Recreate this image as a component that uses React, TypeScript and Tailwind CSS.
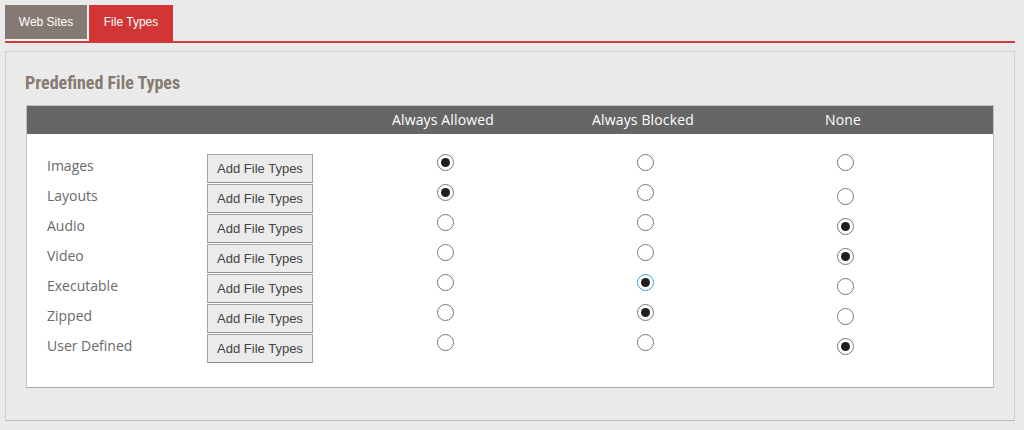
import React from 'react';

type Choice = 0 | 1 | 2;

interface FileTypeRow {
  label: string;
  choice: Choice;
  focused?: boolean;
}

const rows: FileTypeRow[] = [
  { label: 'Images', choice: 0 },
  { label: 'Layouts', choice: 0 },
  { label: 'Audio', choice: 2 },
  { label: 'Video', choice: 2 },
  { label: 'Executable', choice: 1, focused: true },
  { label: 'Zipped', choice: 1 },
  { label: 'User Defined', choice: 2 },
];

const openSans = { fontFamily: '"Open Sans", "Noto Sans", sans-serif' };
const arial = { fontFamily: '"Liberation Sans", Arial, sans-serif' };

function Radio({ checked, focused }: { checked: boolean; focused?: boolean }) {
  return (
    <div
      className={`w-[17px] h-[17px] rounded-full border bg-white flex items-center justify-center ${
        focused ? 'border-[#3aa3dc]' : 'border-[#7a7a7a]'
      }`}
    >
      {checked && <div className="w-[9px] h-[9px] rounded-full bg-[#1e1e1e]" />}
    </div>
  );
}

export default function App() {
  return (
    <div className="w-[1024px] h-[430px] bg-[#eaeaea] pt-[5px] pl-[5px] pr-[9px] overflow-hidden">
      {/* Tabs */}
      <div className="flex items-start border-b-2 border-[#d13a3a]" style={arial}>
        <div className="w-[84px] h-[36px] border-r-2 border-b-2 border-[#f3f3f3]">
          <div className="w-full h-full bg-[#857a73] text-white text-[12px] flex items-center justify-center pb-[1px]">
            Web Sites
          </div>
        </div>
        <div className="w-[84px] h-[36px] bg-[#d13535] text-white text-[12px] flex items-center justify-center pb-[3px]">
          File Types
        </div>
      </div>

      {/* Panel */}
      <div className="mt-[8px] h-[370px] border border-[#cfcfcf] border-b-[#bdbdbd] pl-[20px] pr-[20px] pt-[19px]">
        <h2
          className="text-[18px] leading-[24px] font-bold text-[#867a72] -ml-[1px]"
          style={{ fontFamily: '"Roboto Condensed", "DejaVu Sans Condensed", Roboto, sans-serif' }}
        >
          Predefined File Types
        </h2>

        <div className="mt-[10px] border border-[#c2c2c2] border-b-[#a8a8a8] bg-white pb-[24px]">
          {/* Header */}
          <div
            className="h-[28px] bg-[#666666] text-white text-[14px] grid grid-cols-[20px_160px_106px_32px_200px_200px_200px] items-center pb-[2px]"
            style={openSans}
          >
            <div />
            <div />
            <div />
            <div />
            <div className="text-center -ml-[4px] tracking-[0.01em]">Always Allowed</div>
            <div className="text-center -ml-[4px] tracking-[0.01em]">Always Blocked</div>
            <div className="text-center -ml-[4px] tracking-[0.01em]">None</div>
          </div>

          {/* Rows */}
          <div className="pt-[19px]">
            {rows.map((row, i) => (
              <div
                key={row.label}
                className="h-[30px] grid grid-cols-[20px_160px_106px_32px_200px_200px_200px]"
              >
                <div />
                <div
                  className="text-[14px] text-[#6a6a6a] leading-[20px] pt-[3px]"
                  style={openSans}
                >
                  {row.label}
                </div>
                <div className="pt-[1px]">
                  <button
                    className="w-[106px] h-[29px] bg-[#ebebeb] border border-[#a3a3a3] border-b-[#8e8e8e] text-[13px] text-[#444444] flex items-center justify-center"
                    style={arial}
                  >
                    Add File Types
                  </button>
                </div>
                <div />
                {[0, 1, 2].map((c) => (
                  <div
                    key={c}
                    className={`flex justify-center ${c === 2 && i > 0 ? 'pt-[5px]' : 'pt-[1px]'}`}
                  >
                    <Radio checked={row.choice === c} focused={row.focused && row.choice === c} />
                  </div>
                ))}
              </div>
            ))}
          </div>
        </div>
      </div>
    </div>
  );
}
